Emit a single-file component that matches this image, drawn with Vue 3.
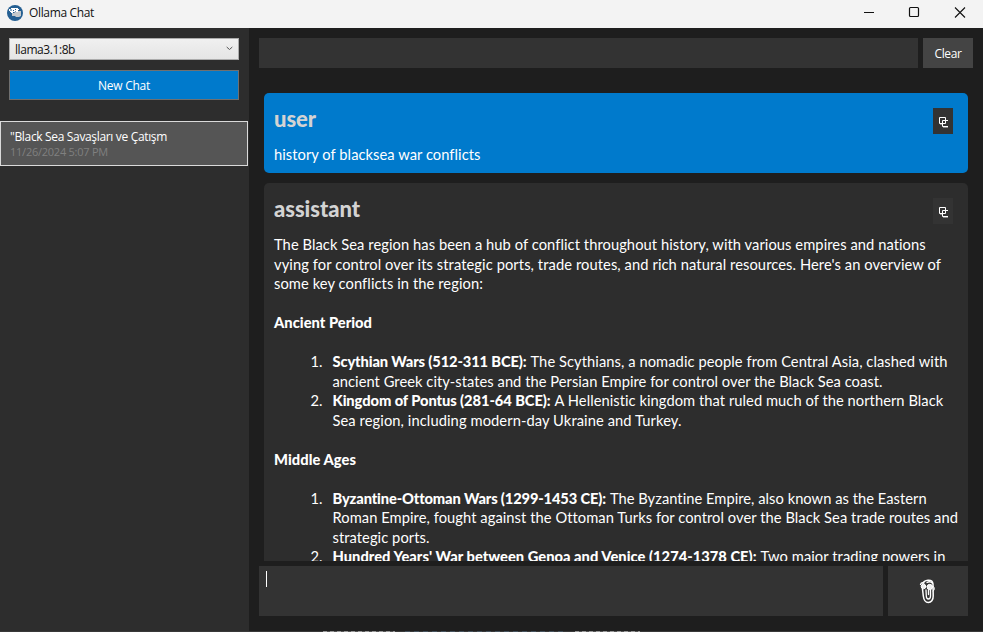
<script setup>
// Each run of text carries the width it should occupy; tracking is adjusted to suit.
const vFit = {
  mounted(el, { value }) {
    if (!value) return
    const n = el.textContent.trim().length
    const w = el.getBoundingClientRect().width
    el.style.letterSpacing = (value - w) / n + 'px'
  }
}
const intro = [
  ['The Black Sea region has been a hub of conflict throughout history, with various empires and nations', 652],
  ["vying for control over its strategic ports, trade routes, and rich natural resources. Here's an overview of", 667],
  ['some key conflicts in the region:', 209]
]
const sections = [
  {
    title: 'Ancient Period', width: 98,
    items: [
      { head: 'Scythian Wars (512-311 BCE):', hw: 194, tail: 'The Scythians, a nomadic people from Central Asia, clashed with', tw: 417,
        rest: [['ancient Greek city-states and the Persian Empire for control over the Black Sea coast.', 550]] },
      { head: 'Kingdom of Pontus (281-64 BCE):', hw: 218, tail: 'A Hellenistic kingdom that ruled much of the northern Black', tw: 389,
        rest: [['Sea region, including modern-day Ukraine and Turkey.', 349]] }
    ]
  },
  {
    title: 'Middle Ages', width: 82,
    items: [
      { head: 'Byzantine-Ottoman Wars (1299-1453 CE):', hw: 273, tail: 'The Byzantine Empire, also known as the Eastern', tw: 317,
        rest: [['Roman Empire, fought against the Ottoman Turks for control over the Black Sea trade routes and', 625], ['strategic ports.', 97]] },
      { head: "Hundred Years' War between Genoa and Venice (1274-1378 CE):", hw: 424, tail: 'Two major trading powers in', tw: 185, rest: [] }
    ]
  }
]
</script>

<template>
  <div class="window">
    <header class="titlebar">
      <svg class="logo" width="16" height="16" viewBox="0 0 16 16">
        <circle cx="8" cy="8" r="8" fill="#245f92" />
        <path d="M5 8h2l2-2h5v5l-2 1H9l-1-1H5z" fill="#c4c8cb" />
        <path d="M2 4h2V3h7v1h1v1h-1v2H9V6H8v1H6v1H4V7H3V6H2z" fill="#fff" />
        <path d="M3 4.500h2v1H3zM6 5h1v1H6zM8 4h1v1H8z" fill="#245f92" />
      </svg>
      <span class="caption" v-fit="65">Ollama Chat</span>
      <svg class="controls" width="120" height="28" viewBox="0 0 120 28" fill="none" stroke="#111" stroke-width="1">
        <path d="M10 12.5h10" />
        <rect x="55.5" y="7.5" width="9" height="9" rx="1" stroke-width="1.2" />
        <path d="M101 7.5l10 10M111 7.5l-10 10" stroke-width="1.1" />
      </svg>
    </header>
    <div class="body">
      <aside class="sidebar">
        <div class="select">
          <span v-fit="60">llama3.1:8b</span>
          <svg width="7" height="5" viewBox="0 0 7 5" fill="none" stroke="#555"><path d="M.7 1l2.8 2.5L6.3 1" /></svg>
        </div>
        <button class="new"><span v-fit="52">New Chat</span></button>
        <div class="chat">
          <div class="name"><span v-fit="157">"Black Sea Savaşları ve Çatışm</span></div>
          <div class="date"><span v-fit="98">11/26/2024 5:07 PM</span></div>
        </div>
      </aside>
      <main class="main">
        <div class="top">
          <div class="search"></div>
          <button class="clear"><span v-fit="27">Clear</span></button>
        </div>
        <div class="messages">
          <article class="card user">
            <div class="role"><h2 v-fit="42">user</h2>
              <button class="copy"><svg width="12" height="13" viewBox="0 0 12 13" fill="none" stroke="#fff"><path d="M2.500 1.500h6v6h-6zM11 4.500H5.500v6H11" /><path d="M3 8.500h2M6 11.500h5" stroke="#888" /></svg></button>
            </div>
            <div class="line"><span v-fit="206.500">history of blacksea war conflicts</span></div>
          </article>
          <article class="card assistant">
            <div class="role"><h2 v-fit="86">assistant</h2>
              <button class="copy"><svg width="12" height="13" viewBox="0 0 12 13" fill="none" stroke="#fff"><path d="M2.500 1.500h6v6h-6zM11 4.500H5.500v6H11" /><path d="M3 8.500h2M6 11.500h5" stroke="#888" /></svg></button>
            </div>
            <div v-for="l in intro" :key="l[0]" class="line"><span v-fit="l[1]">{{ l[0] }}</span></div>
            <section v-for="s in sections" :key="s.title">
              <h3><span v-fit="s.width">{{ s.title }}</span></h3>
              <div v-for="(it, i) in s.items" :key="it.head" class="item">
                <span class="num">{{ i + 1 }}.</span>
                <div>
                  <div class="line pair"><b v-fit="it.hw">{{ it.head }}</b><span v-fit="it.tw">{{ it.tail }}</span></div>
                  <div v-for="r in it.rest" :key="r[0]" class="line"><span v-fit="r[1]">{{ r[0] }}</span></div>
                </div>
              </div>
            </section>
          </article>
        </div>
        <div class="compose">
          <div class="input"><i class="caret"></i></div>
          <button class="send">
            <svg width="18" height="28" viewBox="0 0 18 28" fill="none" stroke="#fff" stroke-linecap="round">
              <path d="M3.500 12l.8 7c.5 4 2.200 6.500 5 6.500s5-2.500 4.900-6.500l-.2-12c-.3-2.700-2.500-4-5-3.800S4.500 4.500 4 6.500" stroke-width="1.500" />
              <path d="M7 13l.3 6c.1 2 .8 3 2 3s2.200-1 2.200-3V13" stroke-width="1.300" />
              <path d="M1.500 7.500C2 6 3.500 5.500 5 6M8 5.500c2-1.200 4-.8 5.500.8M9.500 13v4.500" stroke-width="1.300" />
              <circle cx="4.500" cy="9.500" r="2.300" fill="#eee" /><circle cx="10.800" cy="10" r="2.700" fill="#eee" />
              <path d="M14.500 9.500c1.500 1.500 1 3.500-.3 4.500" />
            </svg>
          </button>
        </div>
      </main>
    </div>
    <div class="edge"></div>
  </div>
</template>

<style>
body { background: #1e1e1e; overflow: hidden; }
</style>
<style scoped>
* { box-sizing: border-box; }
button { border: 0; padding: 0; color: #fff; font: inherit; display: flex; align-items: center; justify-content: center; }
.window { width: 983px; height: 632px; display: flex; flex-direction: column; font: 12px/16px "Open Sans", sans-serif; color: #fff; background: #1e1e1e; overflow: hidden; white-space: nowrap; }
.titlebar { height: 28px; flex: none; background: #f3f3f3; color: #111; display: flex; align-items: center; padding: 0 9px 4px 7px; }
.caption { margin-left: 6px; padding-top: 2px; }
.logo { margin-top: 1px; }
.controls { margin-left: auto; margin-top: 4px; }
.body { flex: 1; min-height: 0; display: flex; }
.sidebar { width: 249px; background: #2d2d2d; padding-top: 10px; }
.select { margin: 0 10px 0 9px; height: 22px; border: 1px solid #acacac; background: linear-gradient(#f0f0f0, #e5e5e5); color: #111; display: flex; align-items: center; justify-content: space-between; padding: 2px 5px 0; }
.select svg { margin-top: -3px; }
.new { margin: 10px 10px 0 9px; width: 230px; height: 30px; background: #007acc; border: 1px solid #707070; padding-top: 2px; }
.chat { margin-top: 21px; width: 248px; height: 45px; border: 1px solid #dadada; background: #555; padding: 7px 9px; }
.name { height: 15px; }
.date { color: #808080; font-size: 11px; line-height: 16px; }
.main { flex: 1; min-width: 0; padding: 10px 10px 15px; display: flex; flex-direction: column; }
.top { display: flex; gap: 5px; height: 30px; flex: none; }
.search { flex: 1; background: #333; }
.clear { width: 50px; background: #444; padding-top: 2px; }
.messages { margin: 25px 5px 0; height: 468px; flex: none; overflow: hidden; display: flex; flex-direction: column; gap: 10px; font: 14.7px/19.53px Lato, sans-serif; }
.card { border-radius: 5px; padding: 10px; flex: none; background: #2d2d2d; }
.user { background: #007acc; height: 80.4px; }
.assistant { height: 500px; }
.role { display: flex; justify-content: space-between; padding: 5px 5px 0 0; height: 41.6px; }
h2 { margin: -4px 0 0; font: 900 22px/30px Lato, sans-serif; color: #d3d3d3; }
.copy { width: 20px; height: 26px; background: #333; }
.copy svg { margin-top: 2px; }
.line { height: 19.53px; }
h3 { font: 900 14.7px/19.53px Lato, sans-serif; margin: 19.53px 0; }
.pair b { font-weight: 900; }
.item { display: flex; }
.num { width: 58.500px; flex: none; padding-left: 36.500px; }
.pair { display: flex; gap: 4px; }
.compose { display: flex; gap: 5px; height: 50px; margin: 5px 5px 0 0; }
.input { flex: 1; background: #333; padding: 5px 7px; }
.caret { display: block; width: 1px; height: 16px; background: #fff; }
.send { width: 80px; background: #333; }
.edge { flex: none; height: 1px; background: repeating-linear-gradient(90deg, #999 0 4px, #555 4px 7px) 323px 0 / 72px 1px no-repeat, repeating-linear-gradient(90deg, #46535e 0 5px, #393939 5px 9px) 405px 0 / 160px 1px no-repeat, repeating-linear-gradient(90deg, #999 0 4px, #555 4px 7px) 575px 0 / 65px 1px no-repeat, #393939; }
</style>
